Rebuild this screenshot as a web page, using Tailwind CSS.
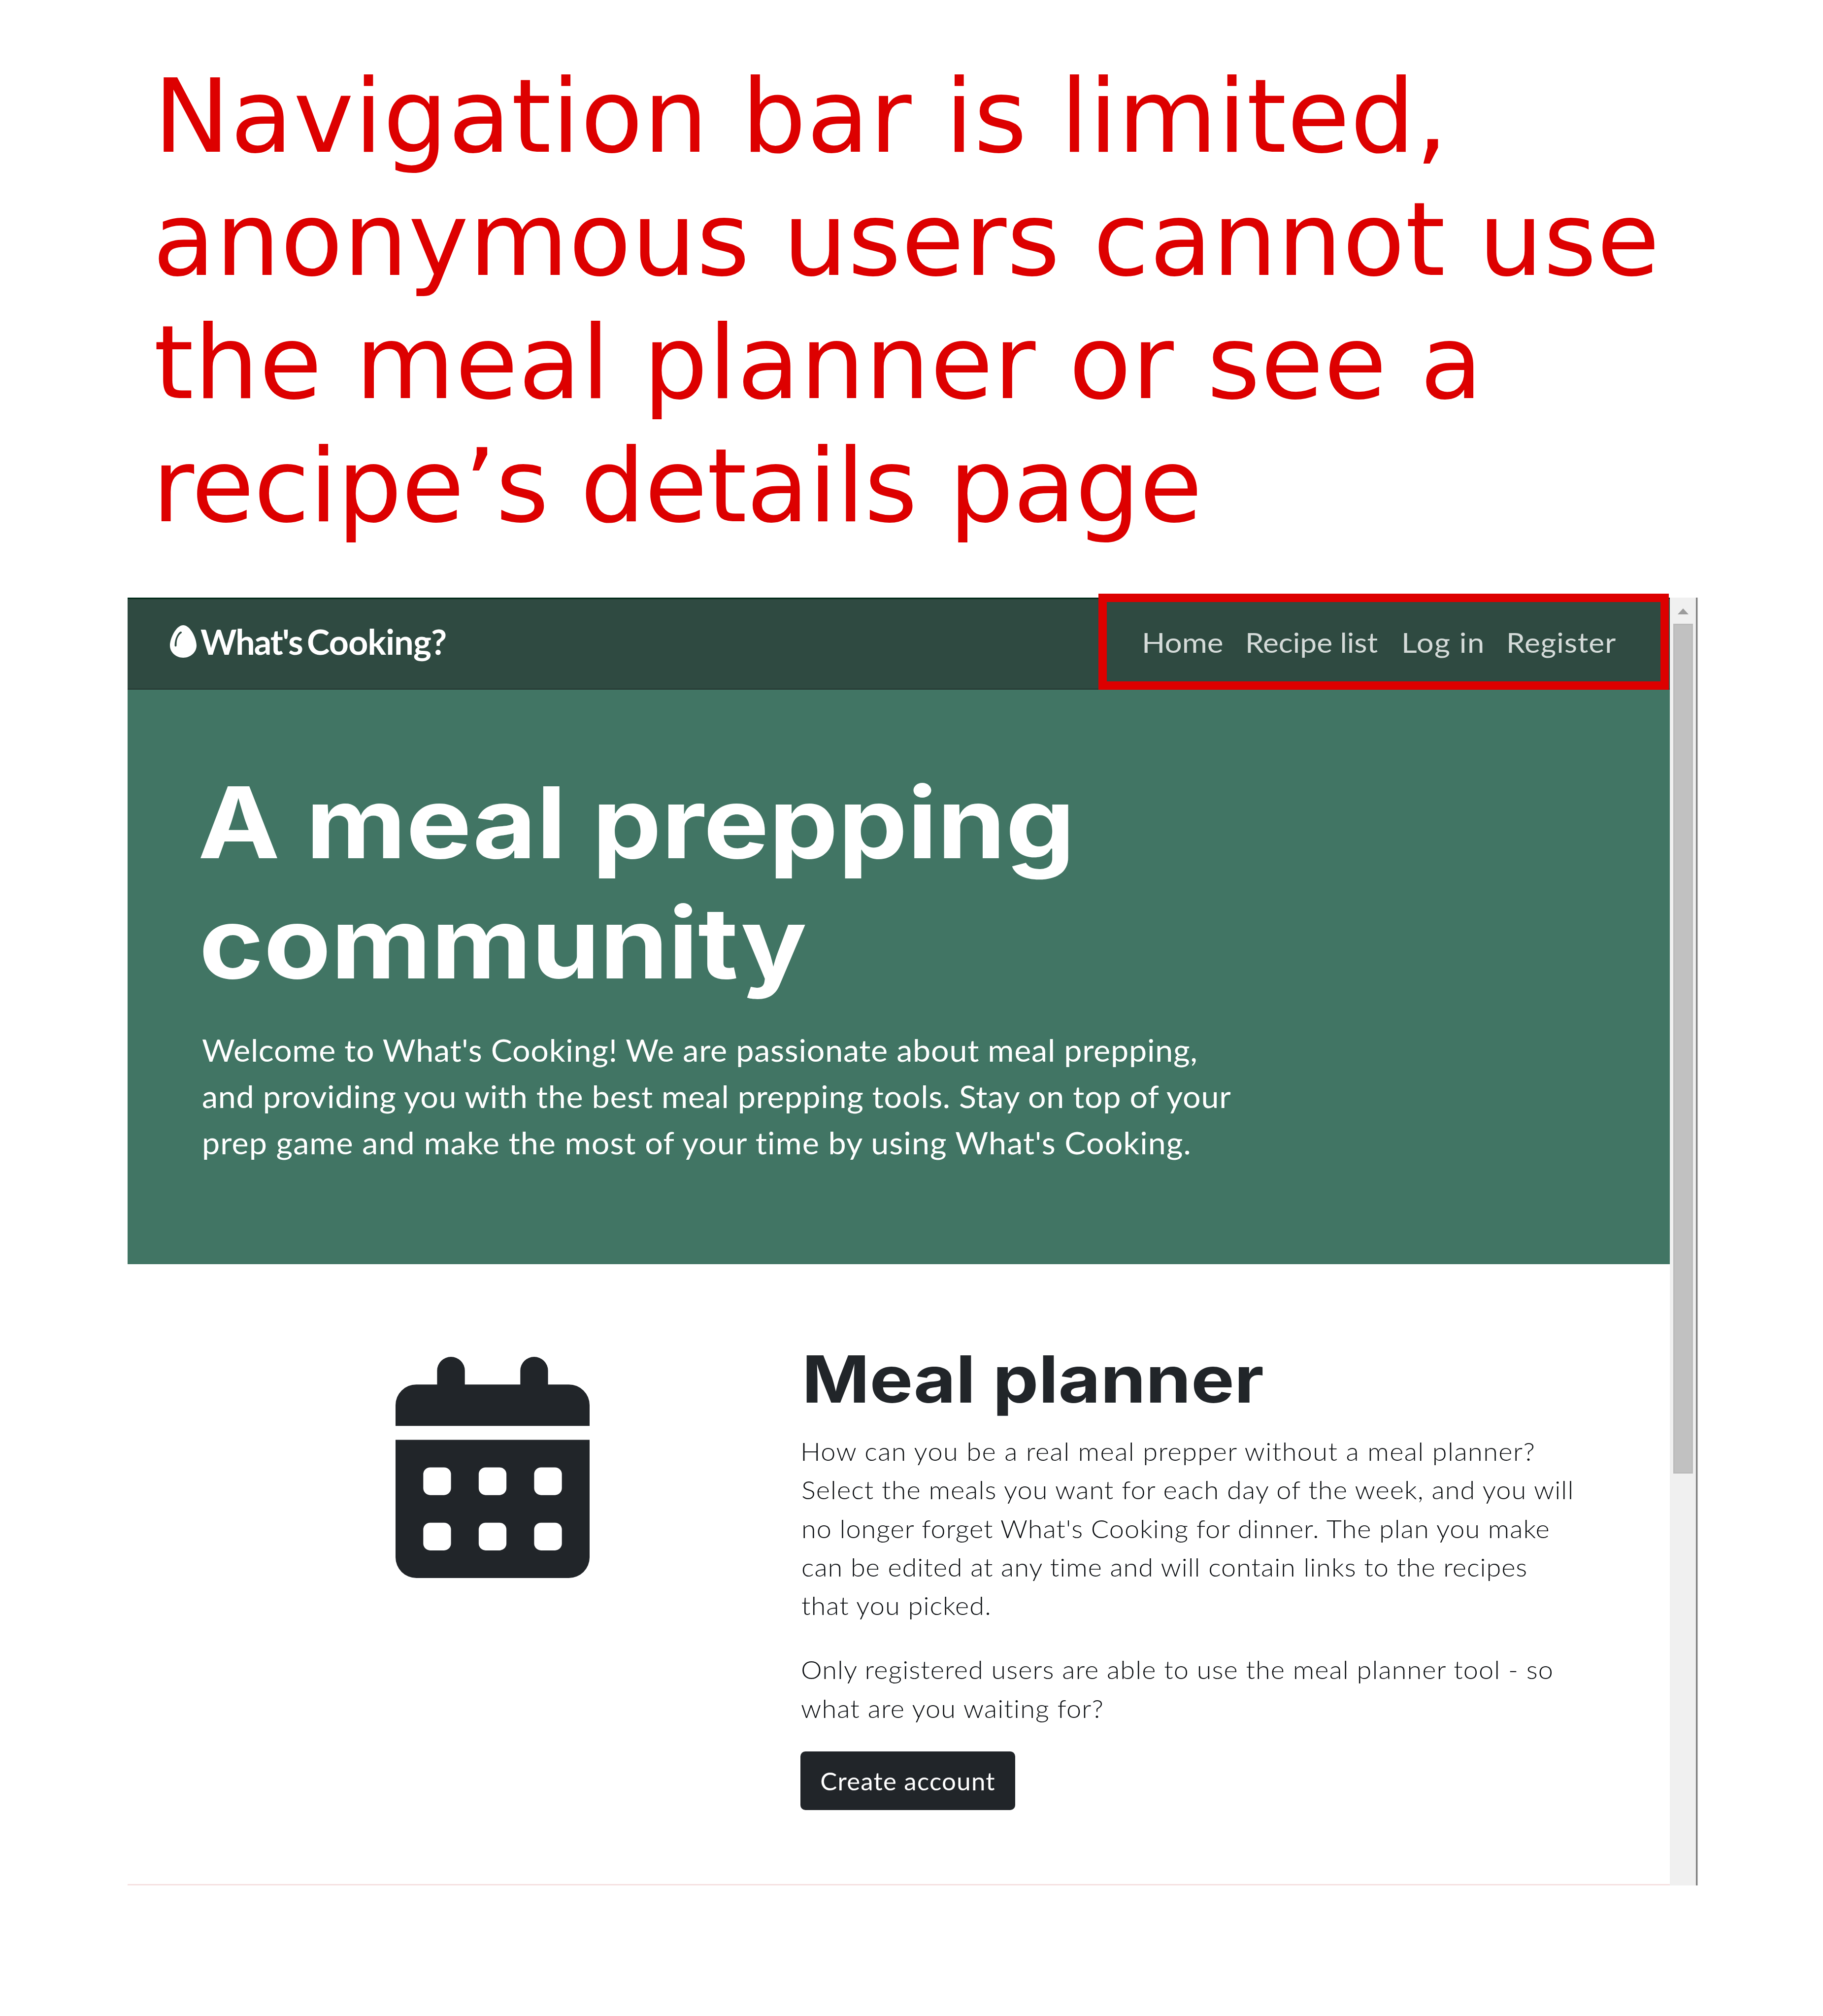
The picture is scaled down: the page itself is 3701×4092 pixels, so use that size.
<!DOCTYPE html>
<html lang="en">
<head>
<meta charset="utf-8">
<title>What's Cooking?</title>
<script src="https://cdn.jsdelivr.net/npm/@tailwindcss/browser@4"></script>
</head>
<body class="bg-white w-[3701px] h-[4092px] overflow-hidden pt-[112px]">
  <p class="pl-[312px] h-[1101px] font-['DejaVu_Sans',sans-serif] text-[207px] leading-[250px] text-[#dd0000] whitespace-nowrap">
    <span class="block tracking-[1px]">Navigation bar is limited,</span>
    <span class="block tracking-[0.79px] -ml-[2px]">anonymous users cannot use</span>
    <span class="block tracking-[1px]">the meal planner or see a</span>
    <span class="block tracking-[-0.9px] -ml-[3px]">recipe’s details page</span>
  </p>

  <div class="relative ml-[259px] flex w-[3188px] h-[2614px] font-[Lato,sans-serif]">
    <div class="w-[3131px] flex flex-col border-b-[3px] border-[#f5e1e1]">
      <header class="h-[187px] shrink-0 bg-[#2f4a41] border-t-[3px] border-t-[#012b1a] border-b-[3px] border-b-[#2a3f38] flex items-center justify-between pl-[86px]">
        <div class="flex items-center text-white font-bold text-[70px] leading-[85px] pb-[8px] whitespace-nowrap">
          <svg class="w-[54px] h-[66px] -mt-[1px]" viewBox="0 0 384 512" preserveAspectRatio="none" fill="#fff">
            <path fill-rule="evenodd" d="M192 0C86 0 0 214 0 320s86 192 192 192 192-86 192-192S298 0 192 0zM160 129C136 143 105 195 98 258c-2 28-2 54-2 62 0 9-7 16-14 16s-14-7-14-16C68 205 118 123 149 103c9-5 17-3 21 5s-1 16-10 21z"/>
          </svg>
          <span class="ml-[8px] w-[208px] tracking-[-1.9px]">What's</span>
          <span class="ml-[8px] tracking-[-0.8px]">Cooking?</span>
        </div>
        <nav class="flex pb-[6px] w-[1072px] text-[56px] leading-[67px] text-[#d5dbd9] whitespace-nowrap">
          <a class="w-[210px] origin-left scale-x-[1.11]">Home</a>
          <a class="w-[317px] origin-left scale-x-[1.08]">Recipe list</a>
          <a class="w-[213px] origin-left scale-x-[1.1] tracking-[1.3px]">Log in</a>
          <a class="origin-left scale-x-[1.08] tracking-[0.9px]">Register</a>
        </nav>
      </header>

      <section class="h-[1166px] shrink-0 bg-[#417564] text-white pt-[148px] pl-[145px] whitespace-nowrap">
        <h1 class="origin-left scale-x-[1.115] font-[Inter,sans-serif] font-bold text-[200px] leading-[243.5px]">
          <span class="block -ml-[2px]">A meal prepping</span>
          <span class="block">community</span>
        </h1>
        <p class="mt-[50px] ml-[6px] origin-left scale-x-[1.06] text-[61px] leading-[94px]">
          <span class="block tracking-[0.68px]">Welcome to What's Cooking! We are passionate about meal prepping,</span>
          <span class="block tracking-[0.65px]">and providing you with the best meal prepping tools. Stay on top of your</span>
          <span class="block tracking-[0.97px]">prep game and make the most of your time by using What's Cooking.</span>
        </p>
      </section>

      <section class="flex flex-1 text-[#212529]">
        <div class="w-[1366px] pl-[544px] pt-[188px]">
          <svg class="w-[394px] h-[449px]" viewBox="0 0 448 512" preserveAspectRatio="none" fill="#212529">
            <path d="M96 32a32 32 0 0 1 64 0v32h128V32a32 32 0 0 1 64 0v32h48a48 48 0 0 1 48 48v48H0v-48a48 48 0 0 1 48-48h48z"/>
            <path fill-rule="evenodd" d="M0 192h448v272a48 48 0 0 1-48 48H48a48 48 0 0 1-48-48zM80 256a16 16 0 0 0-16 16v32a16 16 0 0 0 16 16h32a16 16 0 0 0 16-16v-32a16 16 0 0 0-16-16zM208 256a16 16 0 0 0-16 16v32a16 16 0 0 0 16 16h32a16 16 0 0 0 16-16v-32a16 16 0 0 0-16-16zM336 256a16 16 0 0 0-16 16v32a16 16 0 0 0 16 16h32a16 16 0 0 0 16-16v-32a16 16 0 0 0-16-16zM80 384a16 16 0 0 0-16 16v32a16 16 0 0 0 16 16h32a16 16 0 0 0 16-16v-32a16 16 0 0 0-16-16zM208 384a16 16 0 0 0-16 16v32a16 16 0 0 0 16 16h32a16 16 0 0 0 16-16v-32a16 16 0 0 0-16-16zM336 384a16 16 0 0 0-16 16v32a16 16 0 0 0 16 16h32a16 16 0 0 0 16-16v-32a16 16 0 0 0-16-16z"/>
          </svg>
        </div>
        <div class="pt-[154px] flex flex-col items-start whitespace-nowrap text-[51px] leading-[78.3px]">
          <h2 class="origin-left ml-[3px] scale-x-[1.118] font-[Inter,sans-serif] font-bold text-[132px] leading-[158px]">Meal planner</h2>
          <p class="mt-[29px] ml-[2px] origin-left scale-x-[1.06] font-light text-[#0c0f12]">
            <span class="block -ml-[2px] tracking-[1.34px]">How can you be a real meal prepper without a meal planner?</span>
            <span class="block tracking-[1px]">Select the meals you want for each day of the week, and you will</span>
            <span class="block tracking-[0.92px]">no longer forget What's Cooking for dinner. The plan you make</span>
            <span class="block tracking-[0.9px]">can be edited at any time and will contain links to the recipes</span>
            <span class="block tracking-[1px]">that you picked.</span>
          </p>
          <p class="mt-[52px] ml-[1px] origin-left scale-x-[1.06] font-light text-[#0c0f12]">
            <span class="block tracking-[1px]">Only registered users are able to use the meal planner tool - so</span>
            <span class="block tracking-[1.05px]">what are you waiting for?</span>
          </p>
          <a class="mt-[48px] w-[436px] h-[119px] rounded-[10px] bg-[#212529] text-white leading-[119px] text-center tracking-[1.22px]">Create account</a>
        </div>
      </section>
    </div>

    <div class="w-[53px] bg-[#f0f0f0] flex flex-col items-center pt-[22px]">
      <svg class="w-[22px] h-[12px]" viewBox="0 0 22 12" fill="#9c9c9c"><path d="M11 0 22 12H0z"/></svg>
      <div class="mt-[19px] w-[40px] h-[1725px] bg-[#c1c1c1] border-[3px] border-[#bbbbbb]"></div>
    </div>
    <div class="w-[3px] bg-[#808080]"></div>
    <div class="w-px bg-[#c8c8c8]"></div>

    <div class="absolute left-[1971px] -top-[8px] w-[1158px] h-[195px] border-[17px] border-[#dd0000]"></div>
  </div>
</body>
</html>
